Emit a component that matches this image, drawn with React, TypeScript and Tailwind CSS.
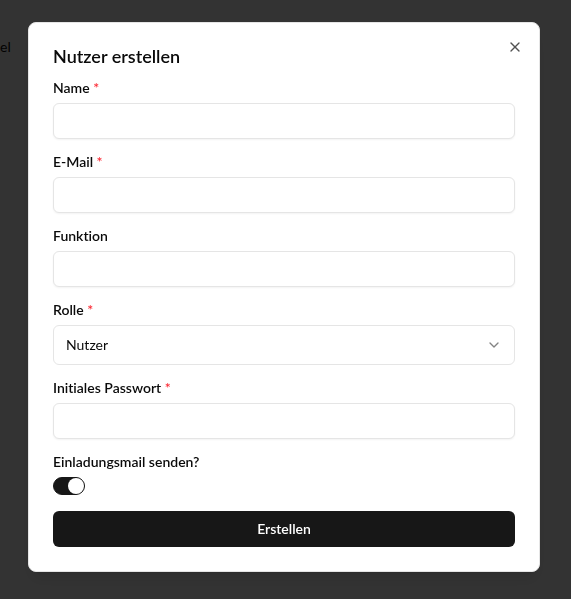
import React, { useState } from 'react';
import { X, ChevronDown } from 'lucide-react';

const Field = ({ label, required, children }: { label: string; required?: boolean; children: React.ReactNode }) => (
  <div className="flex flex-col gap-2">
    <label className="text-sm font-semibold leading-none text-[#0a0a0a]">
      {label}
      {required && <span className="text-red-500"> *</span>}
    </label>
    {children}
  </div>
);

const TextInput = () => (
  <input
    type="text"
    className="h-9 w-full rounded-md border border-[#e5e5e5] bg-white px-3 text-sm shadow-xs outline-none"
  />
);

export default function App() {
  const [invite, setInvite] = useState(true);

  return (
    <div className="relative h-[599px] w-full overflow-hidden bg-white font-['Lato',sans-serif] [font-variant-ligatures:none]">
      {/* page behind the modal */}
      <div className="pt-[37px] text-sm text-[#0a0a0a]">el</div>

      {/* overlay */}
      <div className="fixed inset-0 bg-black/80" />

      {/* dialog */}
      <div className="fixed left-[28px] top-[22px] flex w-[512px] flex-col gap-4 rounded-lg border border-[#e5e5e5] bg-white p-6 shadow-lg">
        <h2 className="text-lg font-semibold leading-none text-[#0a0a0a]">Nutzer erstellen</h2>

        <button className="absolute right-4 top-4 text-[#0a0a0a] opacity-70">
          <X size={16} strokeWidth={2} />
        </button>

        <Field label="Name" required>
          <TextInput />
        </Field>
        <Field label="E-Mail" required>
          <TextInput />
        </Field>
        <Field label="Funktion">
          <TextInput />
        </Field>
        <Field label="Rolle" required>
          <div className="flex h-10 w-full items-center justify-between rounded-md border border-[#e5e5e5] bg-white px-3 text-sm text-[#0a0a0a]">
            <span>Nutzer</span>
            <ChevronDown size={16} className="opacity-50" />
          </div>
        </Field>
        <Field label="Initiales Passwort" required>
          <TextInput />
        </Field>
        <Field label="Einladungsmail senden?">
          <button
            onClick={() => setInvite(!invite)}
            className={`flex h-[18px] w-8 items-center rounded-full border border-[#171717] p-0 ${invite ? 'justify-end bg-[#171717]' : 'justify-start bg-[#e5e5e5]'}`}
          >
            <span className="h-4 w-4 rounded-full bg-white" />
          </button>
        </Field>

        <button className="h-9 w-full rounded-md bg-[#171717] text-sm font-semibold text-white">Erstellen</button>
      </div>
    </div>
  );
}
